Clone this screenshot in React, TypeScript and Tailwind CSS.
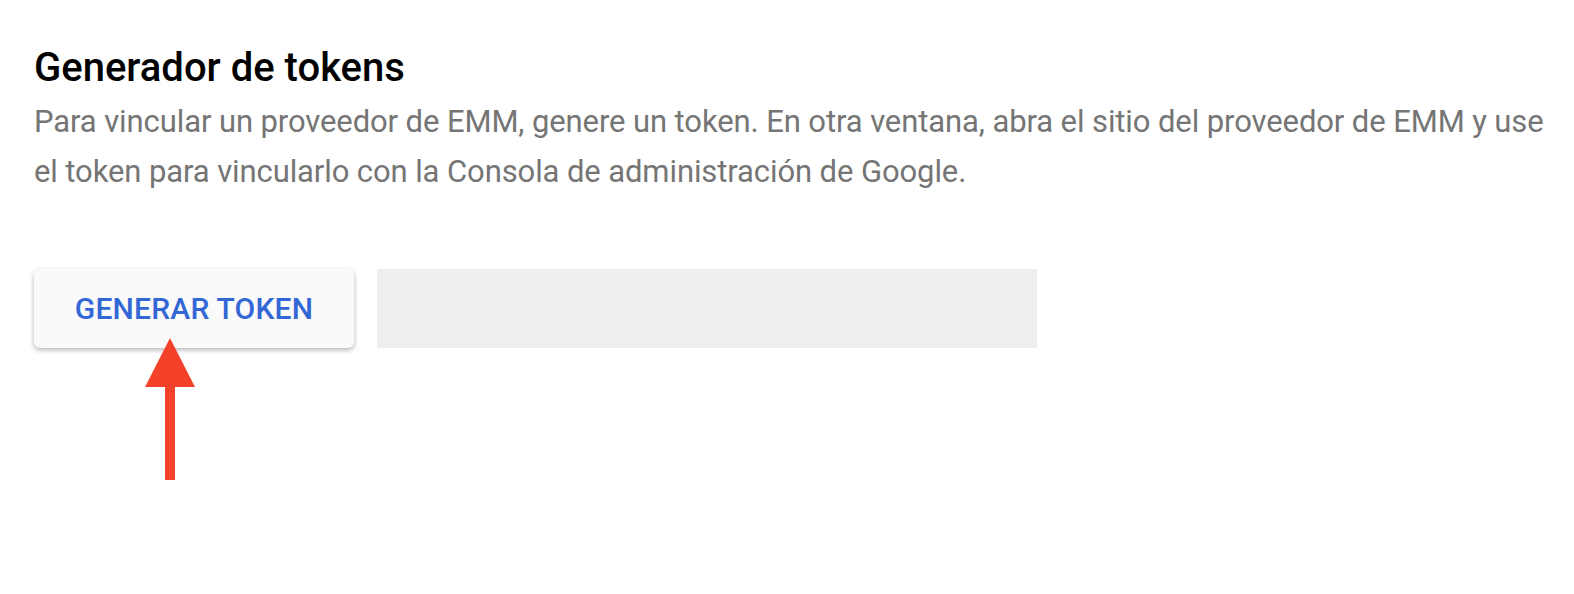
import React from "react";

export default function App() {
  return (
    <div className="relative w-[1574px] h-[594px] bg-white overflow-hidden" style={{ fontFamily: "Roboto, 'Noto Sans', sans-serif" }}>
      <div className="pl-[34px] pt-[44px]">
        <h1 className="text-[40px] leading-[48px] font-medium text-[#000000]">Generador de tokens</h1>
        <p className="mt-[5px] text-[31px] leading-[50px] tracking-[-0.1px] text-[#757575] whitespace-nowrap">
          Para vincular un proveedor de EMM, genere un token. En otra ventana, abra el sitio del proveedor de EMM y use
          <br />
          el token para vincularlo con la Consola de administración de Google.
        </p>
        <div className="mt-[72px] flex items-center gap-[23px]">
          <button className="w-[320px] h-[79px] rounded-[6px] bg-[#fafafa] text-[#3367d6] text-[30px] font-medium tracking-[0.2px] shadow-[0_2px_5px_rgba(0,0,0,0.3)] flex items-center justify-center">
            GENERAR TOKEN
          </button>
          <div className="w-[660px] h-[79px] bg-[#eeeeee]" />
        </div>
      </div>
      <svg className="absolute left-0 top-0" width="1574" height="594" viewBox="0 0 1574 594">
        <polygon points="170,338 195,387 145,387" fill="#f4422a" />
        <rect x="165" y="386" width="10" height="94" fill="#f4422a" />
      </svg>
    </div>
  );
}
